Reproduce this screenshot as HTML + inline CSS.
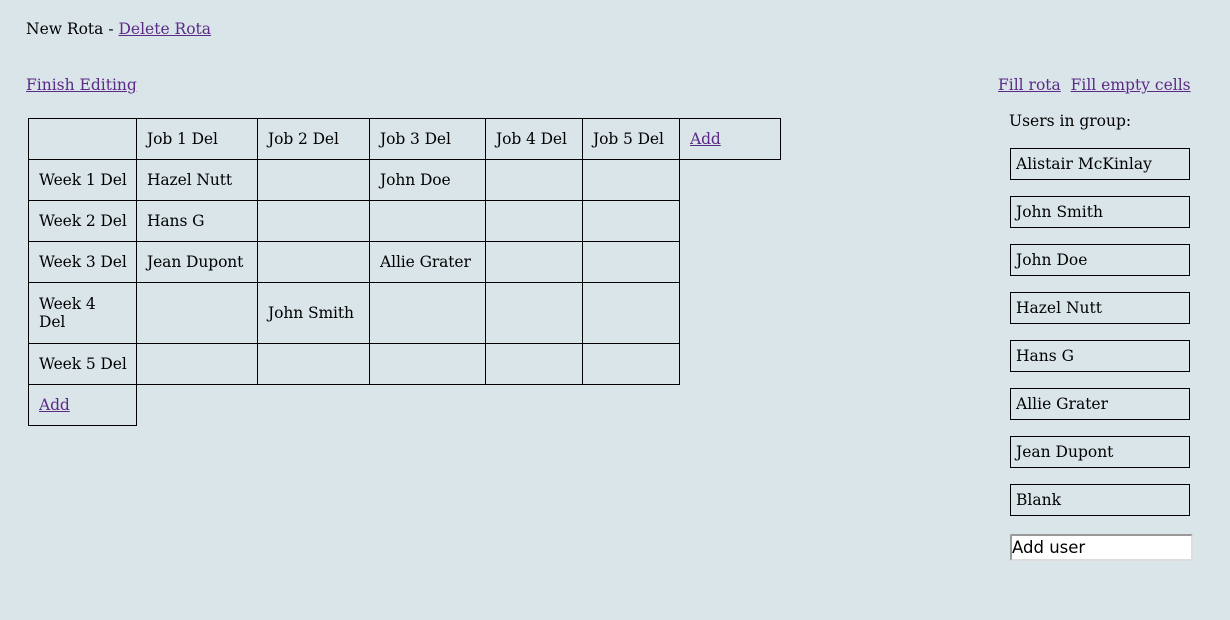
<!DOCTYPE html>
<html><head><meta charset="utf-8"><style>
body{margin:0;width:1230px;height:620px;background:#dae5ea;font-family:"DejaVu Serif","Liberation Serif",serif;font-size:15.5px;color:#000;position:relative;overflow:hidden}
a{color:#5b2a86;text-decoration:underline}
.a{position:absolute;white-space:nowrap}
.c{position:absolute;border:1px solid #000;box-sizing:border-box;display:flex;align-items:center;padding-left:10px;line-height:18px}
.u{position:absolute;left:1010px;width:180px;height:32px;border:1px solid #000;box-sizing:border-box;padding-left:5px;line-height:31px;white-space:nowrap}
</style></head><body>
<div class="a" style="left:26px;top:20px">New Rota - <a>Delete Rota</a></div>
<div class="a" style="left:26px;top:76px"><a>Finish Editing</a></div>
<div class="a" style="left:998px;top:76px"><a>Fill rota</a>&nbsp; <a>Fill empty cells</a></div>
<div class="a" style="left:1009px;top:112px">Users in group:</div>
<div id="t"></div>
<div class="u" style="top:148px">Alistair McKinlay</div>
<div class="u" style="top:196px">John Smith</div>
<div class="u" style="top:244px">John Doe</div>
<div class="u" style="top:292px">Hazel Nutt</div>
<div class="u" style="top:340px">Hans G</div>
<div class="u" style="top:388px">Allie Grater</div>
<div class="u" style="top:436px">Jean Dupont</div>
<div class="u" style="top:484px">Blank</div>
<div style="position:absolute;left:1010px;top:534px;width:183px;height:27px;background:#fff;border:2px solid #999;border-right-color:#ddd;border-bottom-color:#ddd;box-sizing:border-box;border-radius:2px;font-family:'DejaVu Sans',sans-serif;font-size:16.5px;line-height:24px;padding-left:0;color:#000">Add user</div>
<script>
var xs=[28,136,257,369,485,582,679,780],ys=[118,159,200,241,282,343,384,425];
var d=[["","Job 1 Del","Job 2 Del","Job 3 Del","Job 4 Del","Job 5 Del","<a>Add</a>"],
["Week 1 Del","Hazel Nutt","","John Doe","",""],
["Week 2 Del","Hans G","","","",""],
["Week 3 Del","Jean Dupont","","Allie Grater","",""],
["Week 4<br>Del","","John Smith","","",""],
["Week 5 Del","","","","",""],
["<a>Add</a>"]];
var h="";
for(var r=0;r<d.length;r++)for(var c=0;c<d[r].length;c++){
h+='<div class="c" style="left:'+xs[c]+'px;top:'+ys[r]+'px;width:'+(xs[c+1]-xs[c]+1)+'px;height:'+(ys[r+1]-ys[r]+1)+'px;white-space:nowrap;letter-spacing:-0.1px">'+d[r][c]+'</div>';}
document.getElementById("t").innerHTML=h;
</script>
</body></html>
